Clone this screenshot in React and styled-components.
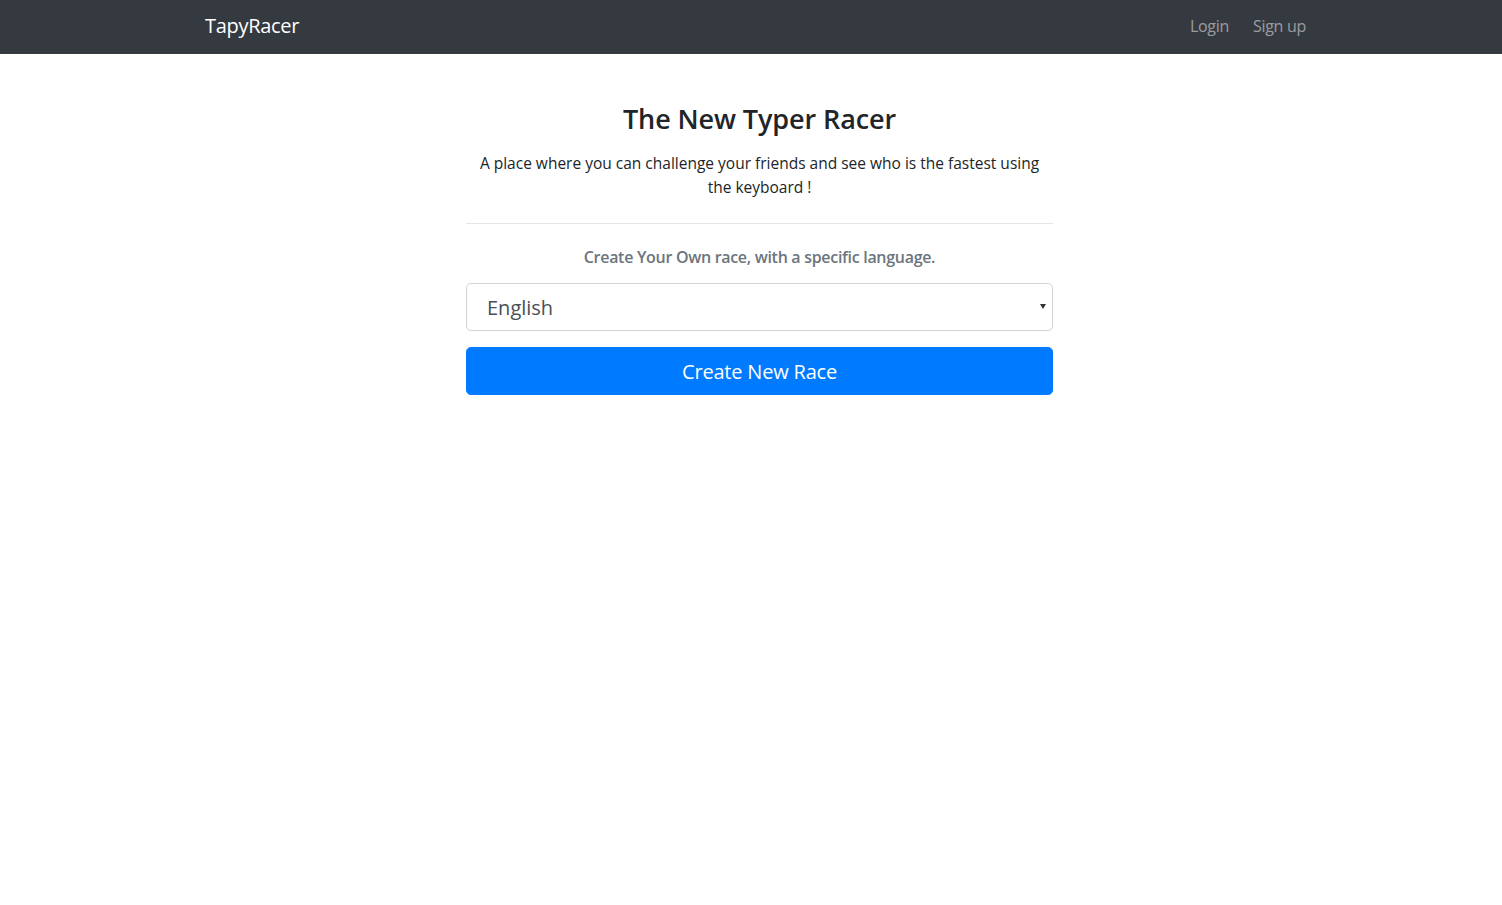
import React, { useState } from "react";
import styled, { createGlobalStyle } from "styled-components";

const GlobalStyle = createGlobalStyle`
  * {
    box-sizing: border-box;
  }
  body {
    margin: 0;
    font-family: "Open Sans", "Noto Sans", sans-serif;
    color: #212529;
    background: #fff;
  }
`;

const Navbar = styled.nav`
  height: 54px;
  padding-bottom: 3px;
  background-color: #343a40;
  display: flex;
  align-items: center;
`;

const NavInner = styled.div`
  width: 1101px;
  margin-left: 205px;
  display: flex;
  align-items: center;
  justify-content: space-between;
`;

const Brand = styled.a`
  color: #fff;
  font-size: 20px;
  text-decoration: none;
  letter-spacing: -0.3px;
`;

const NavLinks = styled.div`
  display: flex;
  gap: 24px;
  padding-top: 1px;
`;

const NavLink = styled.a`
  color: rgba(255, 255, 255, 0.5);
  font-size: 16px;
  text-decoration: none;
  letter-spacing: -0.3px;
`;

const Main = styled.main`
  width: 587px;
  margin: 0 0 0 466px;
  padding-top: 49px;
  text-align: center;
`;

const Title = styled.h3`
  margin: 0 0 16px;
  font-size: 27px;
  font-weight: 600;
  line-height: 1.2;
  letter-spacing: -0.1px;
`;

const Lead = styled.p`
  margin: 0 auto;
  width: 570px;
  font-size: 15.5px;
  line-height: 24px;
`;

const Divider = styled.hr`
  margin: 24px 0 21px;
  border: 0;
  border-top: 1px solid rgba(0, 0, 0, 0.1);
`;

const Hint = styled.p`
  margin: 0 0 14px;
  color: #6c757d;
  font-size: 16px;
  font-weight: 600;
  line-height: 24px;
  letter-spacing: -0.3px;
`;

const SelectWrap = styled.div`
  position: relative;
  margin-bottom: 16px;

  &::after {
    content: "";
    position: absolute;
    right: 7px;
    top: 21px;
    border-left: 3px solid transparent;
    border-right: 3px solid transparent;
    border-top: 5px solid #333;
    pointer-events: none;
  }
`;

const Select = styled.select`
  display: block;
  width: 100%;
  height: 48px;
  padding: 0 20px;
  font-family: inherit;
  font-size: 20px;
  color: #495057;
  background: #fff;
  border: 1px solid #ced4da;
  border-radius: 4.8px;
  appearance: none;
  outline: none;
`;

const Button = styled.button`
  display: block;
  width: 100%;
  height: 48px;
  font-family: inherit;
  font-size: 20px;
  color: #fff;
  background-color: #007bff;
  border: 1px solid #007bff;
  border-radius: 4.8px;
  cursor: pointer;
  letter-spacing: -0.2px;
`;

export default function App() {
  const [lang, setLang] = useState("English");
  return (
    <>
      <GlobalStyle />
      <Navbar>
        <NavInner>
          <Brand href="#">TapyRacer</Brand>
          <NavLinks>
            <NavLink href="#">Login</NavLink>
            <NavLink href="#">Sign up</NavLink>
          </NavLinks>
        </NavInner>
      </Navbar>
      <Main>
        <Title>The New Typer Racer</Title>
        <Lead>
          A place where you can challenge your friends and see who is the
          fastest using the keyboard !
        </Lead>
        <Divider />
        <Hint>Create Your Own race, with a specific language.</Hint>
        <SelectWrap>
          <Select value={lang} onChange={e => setLang(e.target.value)}>
            <option>English</option>
            <option>French</option>
            <option>Spanish</option>
          </Select>
        </SelectWrap>
        <Button>Create New Race</Button>
      </Main>
    </>
  );
}
